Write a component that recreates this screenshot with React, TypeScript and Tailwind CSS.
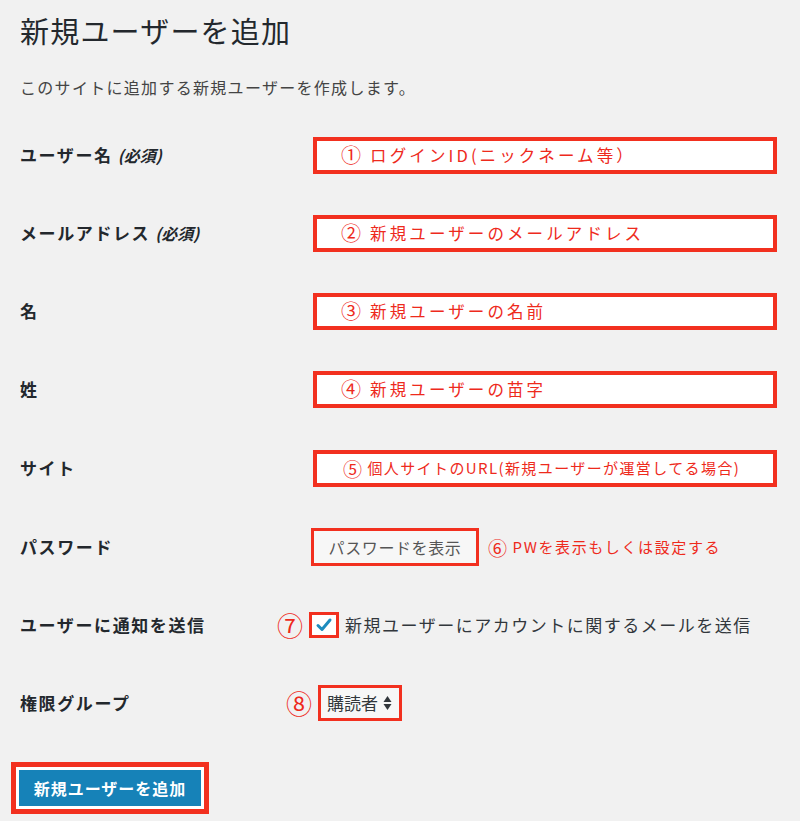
const FONT = '"Noto Sans CJK JP", "Noto Sans", sans-serif';

interface NoteBoxProps {
  num: string;
  text: string;
  small?: boolean;
}

// 赤枠の注釈付き入力欄
function NoteBox({ num, text, small }: NoteBoxProps) {
  return (
    <div className="ml-[55px] flex h-[37px] w-[464px] items-center border-4 border-[#f2301f] bg-white">
      <span
        className={
          small
            ? 'flex items-center pl-[26px] text-[15px] tracking-[1.4px] text-[#ee2a1c]'
            : 'flex items-center pl-[24px] text-[16.5px] tracking-[3.1px] text-[#ee2a1c]'
        }
      >
        <span className={small ? 'mr-[4px] text-[19px] leading-none' : 'mr-[6px] text-[20px] leading-none'}>{num}</span>
        {text}
      </span>
    </div>
  );
}

function Row({ label, required, height, children }: {
  label: string;
  required?: boolean;
  height: string;
  children: React.ReactNode;
}) {
  return (
    <div className={`flex items-center ${height}`}>
      <div className="w-[238px] shrink-0 text-[17px] font-bold tracking-[1.6px] text-[#23282d]">
        {label}
        {required && <span className="ml-[5px] italic text-[16px] tracking-normal">(必須)</span>}
      </div>
      <div className="flex items-center">{children}</div>
    </div>
  );
}

export default function App() {
  return (
    <div className="min-h-[821px] w-[800px] bg-[#f1f1f1] pl-[20px]" style={{ fontFamily: FONT }}>
      <h1 className="pt-[10px] text-[29px] leading-[40px] tracking-[1.2px] text-[#23282d]">新規ユーザーを追加</h1>
      <p className="mt-[25px] text-[16px] leading-[24px] tracking-[1.3px] text-[#444]">
        このサイトに追加する新規ユーザーを作成します。
      </p>

      <div className="mt-[17px]">
        <Row label="ユーザー名" required height="h-[78px]">
          <NoteBox num="①" text="ログインID(ニックネーム等）" />
        </Row>
        <Row label="メールアドレス" required height="h-[78px]">
          <NoteBox num="②" text="新規ユーザーのメールアドレス" />
        </Row>
        <Row label="名" height="h-[78px]">
          <NoteBox num="③" text="新規ユーザーの名前" />
        </Row>
        <Row label="姓" height="h-[78px]">
          <NoteBox num="④" text="新規ユーザーの苗字" />
        </Row>
        <Row label="サイト" height="h-[80px]">
          <NoteBox num="⑤" text="個人サイトのURL(新規ユーザーが運営してる場合)" small />
        </Row>
        <Row label="パスワード" height="h-[78px]">
          <div className="ml-[53px] flex h-[38px] w-[168px] items-center justify-center border-[3px] border-[#f2301f] bg-[#f7f7f7]">
            <span className="text-[16px] tracking-[0.6px] text-[#555]">パスワードを表示</span>
          </div>
          <span className="ml-[9px] flex items-center text-[15px] tracking-[1.6px] text-[#ee2a1c]">
            <span className="mr-[4px] text-[19px] leading-none">⑥</span>
            PWを表示もしくは設定する
          </span>
        </Row>
        <Row label="ユーザーに通知を送信" height="h-[78px]">
          <span className="ml-[19px] text-[26px] leading-none text-[#ee2a1c]">⑦</span>
          <div className="ml-[6px] flex h-[26px] w-[30px] items-center justify-center border-[3px] border-[#f2301f] bg-white">
            <svg width="18" height="16" viewBox="0 0 18 16" fill="none">
              <path d="M3 8.5 L7 12.5 L15 3" stroke="#1e8cbe" strokeWidth="3" strokeLinecap="round" strokeLinejoin="round" />
            </svg>
          </div>
          <span className="ml-[6px] text-[17px] tracking-[1.5px] text-[#32373c]">
            新規ユーザーにアカウントに関するメールを送信
          </span>
        </Row>
        <Row label="権限グループ" height="h-[78px]">
          <span className="ml-[28px] text-[26px] leading-none text-[#ee2a1c]">⑧</span>
          <div className="ml-[6px] flex h-[36px] w-[84px] items-center border-[3px] border-[#f2301f] bg-[#f7f7f7] pl-[6px]">
            <span className="text-[17px] text-[#32373c]">購読者</span>
            <svg className="ml-[5px]" width="9" height="16" viewBox="0 0 9 16">
              <path d="M4.5 1 L8.5 7 L0.5 7 Z" fill="#32373c" />
              <path d="M4.5 15 L8.5 9 L0.5 9 Z" fill="#32373c" />
            </svg>
          </div>
        </Row>
      </div>

      <div className="ml-[-9px] mt-[20px] inline-flex border-[5px] border-[#f2301f] bg-white p-[3px]">
        <button className="flex h-[36px] w-[182px] items-center justify-center bg-[#1682b8] text-[16px] font-bold tracking-[1px] text-white">
          新規ユーザーを追加
        </button>
      </div>
    </div>
  );
}
